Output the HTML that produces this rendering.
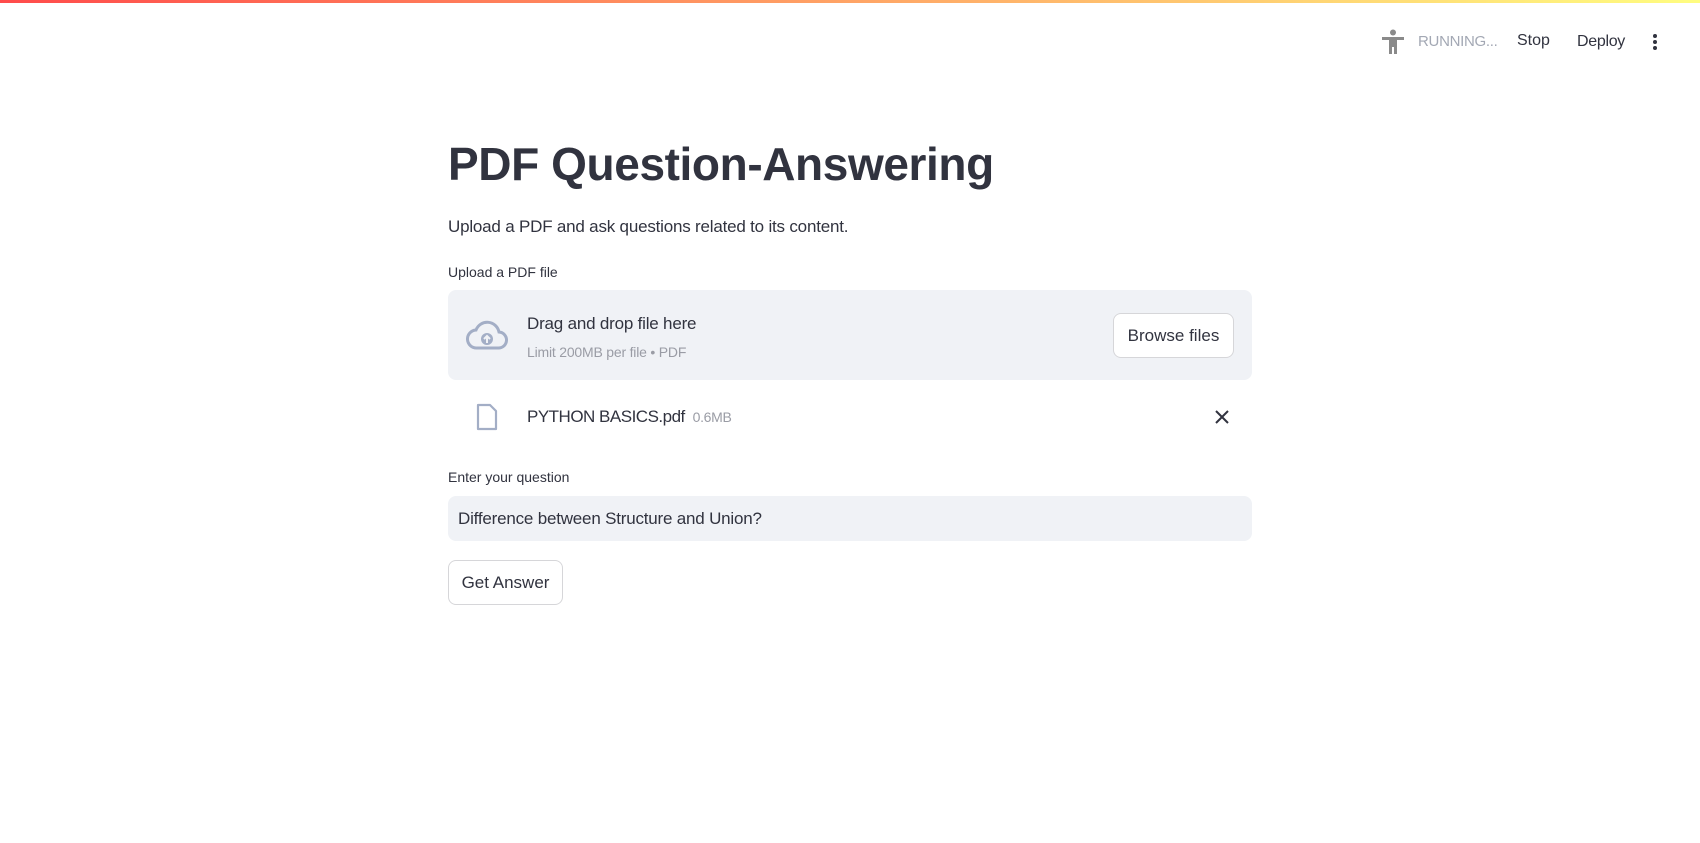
<!DOCTYPE html>
<html><head><meta charset="utf-8"><style>
*{box-sizing:border-box;margin:0;padding:0}
body{width:1700px;height:843px;background:#fff;font-family:"Liberation Sans",sans-serif;color:#31333f;position:relative;overflow:hidden}
.bar{position:absolute;top:0;left:0;width:1700px;height:3px;background:linear-gradient(90deg,#ff4b4b,#fffd80)}
.a{position:absolute;white-space:nowrap}
.btn{position:absolute;border:1px solid #d6d6d9;border-radius:8px;background:#fff;display:flex;align-items:center;justify-content:center;font-size:17px;color:#31333f}
</style></head><body>
<div class="bar"></div>
<svg class="a" style="left:1381px;top:29px" width="24" height="26" viewBox="0 0 24 26"><circle cx="12" cy="3.5" r="3" fill="#8a8a8a"/><path d="M1 8h22v3h-7v14h-3v-7h-2v7H8V11H1z" fill="#8a8a8a"/></svg>
<div class="a" style="left:1418px;top:33px;font-size:15px;color:#a3a8b4;letter-spacing:-0.3px">RUNNING...</div>
<div class="a" style="left:1517px;top:32px;font-size:16px">Stop</div>
<div class="a" style="left:1577px;top:33px;font-size:16px;letter-spacing:-0.3px">Deploy</div>
<svg class="a" style="left:1651px;top:33px" width="8" height="18"><circle cx="4" cy="3" r="2" fill="#31333f"/><circle cx="4" cy="9" r="2" fill="#31333f"/><circle cx="4" cy="15" r="2" fill="#31333f"/></svg>
<div class="a" style="left:448px;top:137px;font-size:46px;font-weight:bold;letter-spacing:-0.4px">PDF Question-Answering</div>
<div class="a" style="left:448px;top:217px;font-size:17px;letter-spacing:-0.2px">Upload a PDF and ask questions related to its content.</div>
<div class="a" style="left:448px;top:264px;font-size:14px">Upload a PDF file</div>
<div class="a" style="left:448px;top:290px;width:804px;height:90px;background:#f0f2f6;border-radius:8px"></div>
<svg class="a" style="left:466px;top:320px" width="42" height="32" viewBox="0 0 42 32"><path d="M11 28h21a8 8 0 0 0 1-16A12 12 0 0 0 10 10 9 9 0 0 0 11 28z" fill="none" stroke="#a3aec6" stroke-width="3"/><circle cx="21" cy="19" r="6" fill="#a3aec6"/><path d="M21 23v-7M18 19l3-3 3 3" stroke="#f0f2f6" stroke-width="2" fill="none"/></svg>
<div class="a" style="left:527px;top:314px;font-size:17px;letter-spacing:-0.2px">Drag and drop file here</div>
<div class="a" style="left:527px;top:344px;font-size:14px;color:#9a9ca5;letter-spacing:-0.2px">Limit 200MB per file • PDF</div>
<div class="btn" style="left:1113px;top:313px;width:121px;height:45px">Browse files</div>
<svg class="a" style="left:476px;top:403px" width="22" height="28" viewBox="0 0 22 28"><path d="M2 2h12l6 6v18H2z" fill="none" stroke="#a3aec6" stroke-width="2.2" stroke-linejoin="round"/></svg>
<div class="a" style="left:527px;top:407px;font-size:17px;letter-spacing:-0.5px">PYTHON BASICS.pdf <span style="font-size:14px;color:#9a9ca5;letter-spacing:-0.3px">&nbsp;0.6MB</span></div>
<svg class="a" style="left:1215px;top:410px" width="14" height="14"><path d="M1 1l12 12M13 1L1 13" stroke="#31333f" stroke-width="2"/></svg>
<div class="a" style="left:448px;top:469px;font-size:14px">Enter your question</div>
<div class="a" style="left:448px;top:496px;width:804px;height:45px;background:#f0f2f6;border-radius:8px"></div>
<div class="a" style="left:458px;top:509px;font-size:17px;letter-spacing:-0.2px">Difference between Structure and Union?</div>
<div class="btn" style="left:448px;top:560px;width:115px;height:45px">Get Answer</div>
</body></html>
